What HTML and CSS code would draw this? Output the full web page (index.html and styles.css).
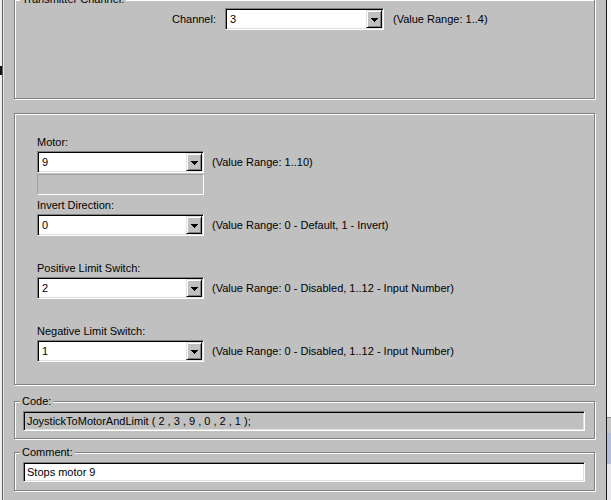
FILE: index.html
```html
<!DOCTYPE html>
<html>
<head>
<meta charset="utf-8">
<title>Joystick To Motor And Limit</title>
<link rel="stylesheet" href="styles.css">
</head>
<body>
<div class="screen">
  <div class="edge-left"><span class="edge-blk"></span></div>
  <div class="dialog">
    <fieldset class="group group-top">
      <legend>Transmitter Channel:</legend>
      <div class="channel-row">
        <span class="channel-label">Channel:</span>
        <div class="combo combo-channel">
          <span class="combo-value">3</span>
          <span class="combo-btn"><svg width="7" height="4" viewBox="0 0 7 4" shape-rendering="crispEdges"><path d="M0 0H7V1H6V2H5V3H4V4H3V3H2V2H1V1H0Z" fill="#000"/></svg></span>
        </div>
        <span class="range">(Value Range: 1..4)</span>
      </div>
    </fieldset>

    <div class="group group-mid">
      <div class="fields">
        <div class="field">
          <div class="label">Motor:</div>
          <div class="field-line">
            <div class="combo">
              <span class="combo-value">9</span>
              <span class="combo-btn"><svg width="7" height="4" viewBox="0 0 7 4" shape-rendering="crispEdges"><path d="M0 0H7V1H6V2H5V3H4V4H3V3H2V2H1V1H0Z" fill="#000"/></svg></span>
            </div>
            <span class="range">(Value Range: 1..10)</span>
          </div>
          <div class="disabled-box"></div>
        </div>
        <div class="field">
          <div class="label">Invert Direction:</div>
          <div class="field-line">
            <div class="combo">
              <span class="combo-value">0</span>
              <span class="combo-btn"><svg width="7" height="4" viewBox="0 0 7 4" shape-rendering="crispEdges"><path d="M0 0H7V1H6V2H5V3H4V4H3V3H2V2H1V1H0Z" fill="#000"/></svg></span>
            </div>
            <span class="range">(Value Range: 0 - Default, 1 - Invert)</span>
          </div>
        </div>
        <div class="field">
          <div class="label">Positive Limit Switch:</div>
          <div class="field-line">
            <div class="combo">
              <span class="combo-value">2</span>
              <span class="combo-btn"><svg width="7" height="4" viewBox="0 0 7 4" shape-rendering="crispEdges"><path d="M0 0H7V1H6V2H5V3H4V4H3V3H2V2H1V1H0Z" fill="#000"/></svg></span>
            </div>
            <span class="range">(Value Range: 0 - Disabled, 1..12 - Input Number)</span>
          </div>
        </div>
        <div class="field">
          <div class="label">Negative Limit Switch:</div>
          <div class="field-line">
            <div class="combo">
              <span class="combo-value">1</span>
              <span class="combo-btn"><svg width="7" height="4" viewBox="0 0 7 4" shape-rendering="crispEdges"><path d="M0 0H7V1H6V2H5V3H4V4H3V3H2V2H1V1H0Z" fill="#000"/></svg></span>
            </div>
            <span class="range">(Value Range: 0 - Disabled, 1..12 - Input Number)</span>
          </div>
        </div>
      </div>
    </div>

    <fieldset class="group group-code">
      <legend>Code:</legend>
      <div class="edit edit-readonly">JoystickToMotorAndLimit ( 2 , 3 , 9 , 0 , 2 , 1 );</div>
    </fieldset>

    <fieldset class="group group-comment">
      <legend>Comment:</legend>
      <div class="edit edit-white">Stops motor 9</div>
    </fieldset>
  </div>
  <div class="edge-right">
    <span class="er-white er-top"></span>
    <span class="er-gray"></span>
    <span class="er-blue"></span>
    <span class="er-white er-bottom"></span>
  </div>
</div>
</body>
</html>
```

FILE: styles.css
```css
* {
  box-sizing: border-box;
}

html, body {
  margin: 0;
  padding: 0;
  background: #c0c0c0;
}

body {
  font-family: "Liberation Sans", Arial, sans-serif;
  font-size: 11px;
  line-height: 13px;
  color: #000;
}

.screen {
  display: flex;
  width: 611px;
  height: 500px;
  overflow: hidden;
}

/* fragments of the windows behind the dialog */
.edge-left {
  width: 3px;
  flex: none;
  background: #f2f0ee;
  border-right: 1px solid #606060;
  display: flex;
  flex-direction: column;
  padding-top: 66px;
}

.edge-blk {
  display: block;
  height: 9px;
  background: #111;
}

.edge-right {
  width: 5px;
  flex: none;
  border-left: 1px solid #1a1a1a;
  display: flex;
  flex-direction: column;
}

.er-white {
  display: block;
  background: #fafafa;
}

.er-top {
  height: 417px;
}

.er-gray {
  display: block;
  height: 16px;
  background: #c8c8c8;
  border-top: 1px solid #909090;
}

.er-blue {
  display: block;
  height: 31px;
  background: #b4bed8;
}

.er-bottom {
  flex: 1;
  background: #e8e8ec;
}

/* dialog body */
.dialog {
  flex: 1;
  min-width: 0;
  padding: 0 11px 0 11px;
  border-left: 1px solid #e4e4e4;
}

.dialog {
  padding-left: 10px;
}

.group {
  margin: 0;
  padding: 0;
  min-width: 0;
  border: 1px solid #808080;
  box-shadow: inset 1px 1px 0 #fff, 1px 1px 0 #fff;
}

.group legend {
  margin-left: 5px;
  padding: 0 2px;
  height: 13px;
  line-height: 13px;
  background: #c0c0c0;
}

.group-top {
  margin-top: -7px;
}

.channel-row {
  display: flex;
  align-items: center;
  margin: 2px 0 68px 0;
  height: 22px;
}

.channel-label {
  width: 201px;
  text-align: right;
  margin-right: 9px;
}

.combo-channel {
  width: 159px !important;
  margin-right: 9px;
}

.group-mid {
  margin-top: 14px;
  padding: 22px 0 22px 22px;
}

.fields {
  display: grid;
  grid-template-rows: 63px 63px 63px auto;
}

.label {
  height: 13px;
  margin-bottom: 2px;
  white-space: nowrap;
}

.field-line {
  display: flex;
  align-items: center;
  gap: 8px;
}

.range {
  white-space: nowrap;
}

/* combo box */
.combo {
  display: flex;
  width: 167px;
  height: 22px;
  flex: none;
  padding: 1px;
  background: #fff;
  border: 1px solid;
  border-color: #808080 #fff #fff #808080;
  box-shadow: inset 1px 1px 0 #000, inset -1px -1px 0 #dfdfdf;
}

.combo-value {
  flex: 1;
  padding-left: 3px;
  line-height: 18px;
}

.combo-btn {
  width: 16px;
  height: 18px;
  display: flex;
  align-items: center;
  justify-content: center;
  background: #c0c0c0;
  border: 1px solid;
  border-color: #dfdfdf #000 #000 #dfdfdf;
  box-shadow: inset 1px 1px 0 #fff, inset -1px -1px 0 #808080;
}

.combo-btn svg {
  display: block;
  margin-top: 1px;
}

.disabled-box {
  width: 167px;
  height: 21px;
  margin-top: 1px;
  border: 1px solid;
  border-color: #a0a0a0 #fff #fff #a0a0a0;
}

/* code & comment */
.group-code {
  margin-top: 10px;
}

.group-comment {
  margin-top: 7px;
}

.edit {
  height: 20px;
  padding: 0 3px;
  line-height: 18px;
  white-space: nowrap;
  overflow: hidden;
  border: 1px solid;
  border-color: #808080 #fff #fff #808080;
  box-shadow: inset 1px 1px 0 #000, inset -1px -1px 0 #dfdfdf;
}

.edit-readonly {
  margin: 3px 9px 7px 8px;
  background: #c0c0c0;
}

.edit-white {
  margin: 3px 9px 8px 8px;
  background: #fff;
}
```
